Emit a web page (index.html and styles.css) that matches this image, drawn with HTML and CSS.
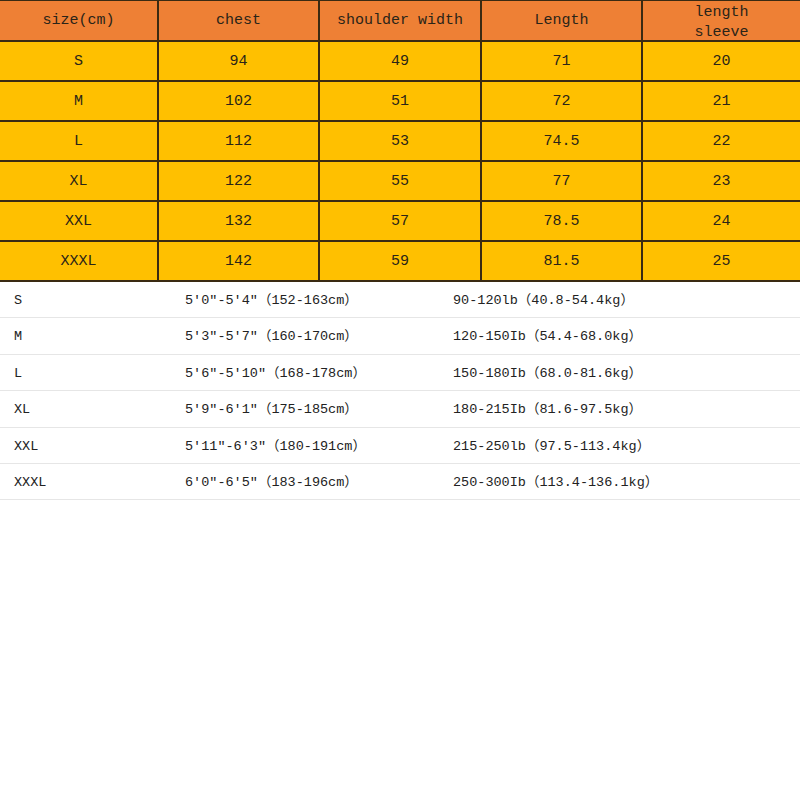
FILE: index.html
```html
<!DOCTYPE html>
<html>
<head>
<meta charset="utf-8">
<link rel="stylesheet" href="styles.css">
</head>
<body>
<table class="chart">
  <colgroup>
    <col class="c1"><col class="c2"><col class="c3"><col class="c4"><col class="c5">
  </colgroup>
  <thead>
    <tr><th>size(cm)</th><th>chest</th><th>shoulder width</th><th>Length</th><th><span class="stack">length<br>sleeve</span></th></tr>
  </thead>
  <tbody>
    <tr><td>S</td><td>94</td><td>49</td><td>71</td><td>20</td></tr>
    <tr><td>M</td><td>102</td><td>51</td><td>72</td><td>21</td></tr>
    <tr><td>L</td><td>112</td><td>53</td><td>74.5</td><td>22</td></tr>
    <tr><td>XL</td><td>122</td><td>55</td><td>77</td><td>23</td></tr>
    <tr><td>XXL</td><td>132</td><td>57</td><td>78.5</td><td>24</td></tr>
    <tr><td>XXXL</td><td>142</td><td>59</td><td>81.5</td><td>25</td></tr>
  </tbody>
</table>
<div class="fit">
  <div class="row"><span class="sz">S</span><span class="ht">5'0″-5'4″（152-163cm）</span><span class="wt">90-120lb（40.8-54.4kg）</span></div>
  <div class="row"><span class="sz">M</span><span class="ht">5'3″-5'7″（160-170cm）</span><span class="wt">120-150Ib（54.4-68.0kg）</span></div>
  <div class="row"><span class="sz">L</span><span class="ht">5'6″-5'10″（168-178cm）</span><span class="wt">150-180Ib（68.0-81.6kg）</span></div>
  <div class="row"><span class="sz">XL</span><span class="ht">5'9″-6'1″（175-185cm）</span><span class="wt">180-215Ib（81.6-97.5kg）</span></div>
  <div class="row"><span class="sz">XXL</span><span class="ht">5'11″-6'3″（180-191cm）</span><span class="wt">215-250lb（97.5-113.4kg）</span></div>
  <div class="row"><span class="sz">XXXL</span><span class="ht">6'0″-6'5″（183-196cm）</span><span class="wt">250-300Ib（113.4-136.1kg）</span></div>
</div>
</body>
</html>
```

FILE: styles.css
```css
html, body {
  margin: 0;
  padding: 0;
  background: #ffffff;
}
body {
  font-family: "Liberation Mono", "Noto Sans CJK SC", monospace;
  color: #2a2418;
}
.chart {
  width: 800px;
  border-collapse: collapse;
  table-layout: fixed;
  font-size: 15px;
}
.c1 { width: 158px; }
.c2 { width: 161px; }
.c3 { width: 162px; }
.c4 { width: 161px; }
.c5 { width: 158px; }
.chart th, .chart td {
  border: 2px solid #3a2a12;
  height: 38px;
  padding: 0;
  text-align: center;
  vertical-align: middle;
  font-weight: normal;
}
.chart th {
  background: #ee8035;
  height: 39px;
}
.chart td {
  background: #ffc000;
}
.stack {
  display: block;
  height: 38px;
  box-sizing: border-box;
  line-height: 20px;
  padding-top: 1px;
  overflow: visible;
}
.chart tr:first-child th {
  border-top: 1px solid #3a2a12;
}
.chart th:first-child, .chart td:first-child { border-left: none; }
.chart th:last-child, .chart td:last-child { border-right: none; }
.fit {
  font-size: 13.5px;
  line-height: 16px;
  color: #222;
}
.row {
  display: flex;
  align-items: baseline;
  height: 36.4px;
  box-sizing: border-box;
  border-bottom: 1.5px solid #e6e6e6;
  padding-left: 14px;
  padding-top: 11px;
}
.sz { width: 171px; }
.ht { width: 268px; }
```
